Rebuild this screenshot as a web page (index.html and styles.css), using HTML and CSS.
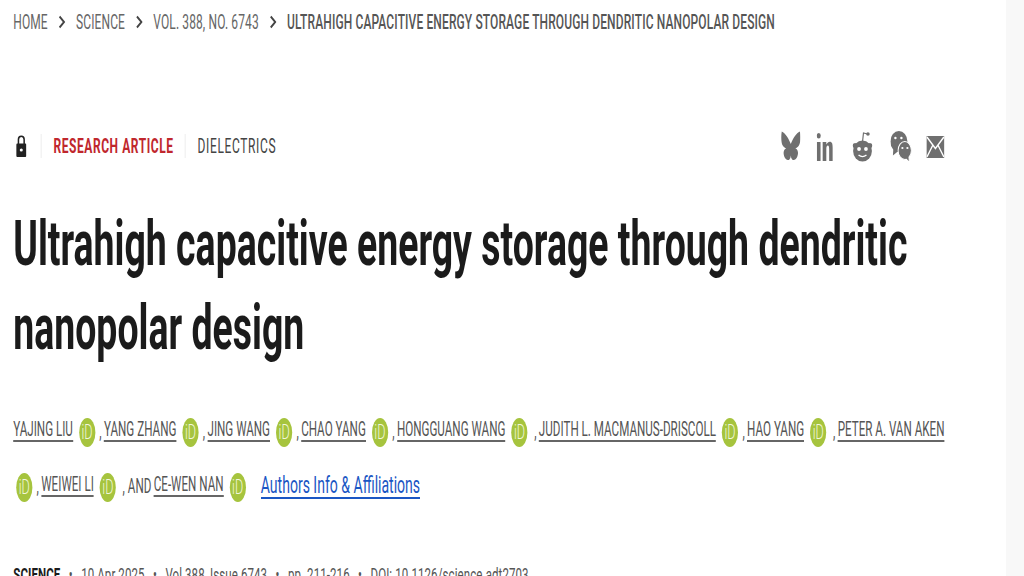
FILE: index.html
```html
<!DOCTYPE html>
<html lang="en">
<head>
    <meta charset="UTF-8">
    <title>Ultrahigh capacitive energy storage through dendritic nanopolar design</title>
    <link rel="stylesheet" href="styles.css">
</head>
<body>
    <div class="page">
    <!-- the whole frame is squeezed sideways, so .sheet carries one scaleX and everything inside is in unscaled px -->
    <div class="sheet">
        <div class="breadcrumb">
            <span>HOME</span>
            <svg class="chev" viewBox="0 0 8 14" preserveAspectRatio="none"><path d="M1.500 1.500 6.500 7l-5 5.500"/></svg>
            <span>SCIENCE</span>
            <svg class="chev" viewBox="0 0 8 14" preserveAspectRatio="none"><path d="M1.500 1.500 6.500 7l-5 5.500"/></svg>
            <span>VOL. 388, NO. 6743</span>
            <svg class="chev" viewBox="0 0 8 14" preserveAspectRatio="none"><path d="M1.500 1.500 6.500 7l-5 5.500"/></svg>
            <strong>ULTRAHIGH CAPACITIVE ENERGY STORAGE THROUGH DENDRITIC NANOPOLAR DESIGN</strong>
        </div>

        <div class="meta-row">
            <div class="tags">
                <svg class="lock" viewBox="0 0 10 22" preserveAspectRatio="none">
                    <path class="lock-hoop" d="M2.200 10V4.500a2.800 3.300 0 0 1 5.600 0V10"/>
                    <rect y="8.500" width="10" height="13.500" rx="1.200"/>
                    <circle class="lock-hole" cx="5" cy="15" r="1.500"/>
                </svg>
                <span class="tag tag-red">RESEARCH ARTICLE</span>
                <span class="tag">DIELECTRICS</span>
            </div>
            <div class="share">
                <svg class="bluesky" viewBox="0 0 19 30" preserveAspectRatio="none"><path d="M.5 .5c3.500 1.500 7 7 9 12.500 2-5.500 5.500-11 9-12.500 1 4 .8 11-1 14-.8 1.500-2.200 2.500-3.500 2.800 2.500 1.200 3.500 4.500 1.800 8.700-1.800 4-5 4-6 .5l-.3-2-.3 2c-1 3.500-4.200 3.500-6 -.5-1.700-4.200-.7-7.500 1.800-8.700C3.700 17 2.300 16 1.500 14.500-.3 11.500-.5 4.500.5 .5z"/></svg>
                <svg class="linkedin" viewBox="0 0 16 28" preserveAspectRatio="none"><ellipse cx="2.100" cy="2.800" rx="2" ry="2.700"/><rect x=".300" y="9" width="3.600" height="19"/><path d="M6 9h3.600v2.600C10.500 9.800 11.800 8.700 13 8.700c2.300 0 3 2.300 3 6V28h-3.600V16c0-2-.3-3.500-1.300-3.500s-1.500 1.500-1.500 3.500v12H6z"/></svg>
                <svg class="reddit" viewBox="0 0 20 32" preserveAspectRatio="none"><path class="thin" d="M10 12 11 3l4 1"/><circle cx="15.500" cy="4" r="1.800"/><circle cx="2.500" cy="15.500" r="2.500"/><circle cx="17.500" cy="15.500" r="2.500"/><ellipse cx="10" cy="21" rx="9.500" ry="10.500"/><circle class="hole" cx="6.500" cy="19" r="1.900"/><circle class="hole" cx="13.500" cy="19" r="1.900"/><path class="smile" d="M6 25c2.500 2 5.500 2 8 0"/></svg>
                <svg class="wechat" viewBox="0 0 21 31" preserveAspectRatio="none">
                    <ellipse cx="8.500" cy="10.500" rx="8.500" ry="10.500"/>
                    <path d="M3 17 2.500 24.500 8 20z"/>
                    <path class="bubble" d="M14.500 10.500c-3.800 0-6.800 4-6.800 9s3 9 6.800 9c.6 0 1-.1 1.500-.2l3 3.200-.4-5.300c1.500-1.600 2.400-4 2.400-6.700 0-5-3-9-6.500-9z"/>
                    <circle class="hole" cx="5" cy="7" r="1.200"/>
                    <circle class="hole" cx="11" cy="7" r="1.200"/>
                    <circle class="hole" cx="12" cy="17" r="1.100"/>
                    <circle class="hole" cx="17" cy="17" r="1.100"/>
                </svg>
                <svg class="mail" viewBox="0 0 18 22" preserveAspectRatio="none"><rect width="18" height="22"/><path class="smile" d="M.5 1 9 12.500 17.500 1M.5 21 6.500 9M17.500 21 11.500 9"/></svg>
            </div>
        </div>

        <h1 class="title">Ultrahigh capacitive energy storage through dendritic nanopolar design</h1>

        <div class="authors">
            <div class="author-line">
                <a class="name">YAJING LIU</a><span class="orcid">iD</span><span class="sep">,</span>
                <a class="name">YANG ZHANG</a><span class="orcid">iD</span><span class="sep">,</span>
                <a class="name">JING WANG</a><span class="orcid">iD</span><span class="sep">,</span>
                <a class="name">CHAO YANG</a><span class="orcid">iD</span><span class="sep">,</span>
                <a class="name">HONGGUANG WANG</a><span class="orcid">iD</span><span class="sep wide">,</span>
                <a class="name">JUDITH L. MACMANUS-DRISCOLL</a><span class="orcid">iD</span><span class="sep">,</span>
                <a class="name">HAO YANG</a><span class="orcid">iD</span><span class="sep wide">,</span>
                <a class="name">PETER A. VAN AKEN</a>
            </div>
            <div class="author-line second">
                <span class="orcid">iD</span><span class="sep">,</span>
                <a class="name">WEIWEI LI</a><span class="orcid">iD</span><span class="sep wide">, AND</span>
                <a class="name">CE-WEN NAN</a><span class="orcid">iD</span>
                <a class="affil">Authors Info &amp; Affiliations</a>
            </div>
        </div>

        <div class="citation">
            <strong>SCIENCE</strong><i>&bull;</i><span>10 Apr 2025</span><i>&bull;</i><span>Vol 388, Issue 6743</span><i>&bull;</i><span>pp. 211-216</span><i>&bull;</i><span>DOI: 10.1126/science.adt2703</span>
        </div>
    </div>
    </div>
</body>
</html>
```

FILE: styles.css
```css
html, body {
    height: 100%;
}
body {
    margin: 0;
    overflow: hidden;
    background-color: #f8f8f8;
    font-family: "Roboto", sans-serif;
    color: #333;
}
.page {
    width: 1006px;
    height: 576px;
    background-color: #fff;
    overflow: hidden;
}
.sheet {
    width: 1677px; /* 1006px after the squeeze */
    height: 576px;
    box-sizing: border-box;
    padding: 11px 0 0 22px;
    transform: scaleX(.6);
    transform-origin: 0 0;
}
.breadcrumb {
    display: flex;
    align-items: center;
    gap: 17.500px;
    height: 21px;
    font-size: 20px;
    letter-spacing: .2px;
    color: #666;
    white-space: nowrap;
}
.breadcrumb strong {
    color: #555;
    font-weight: 500;
}
.chev {
    width: 12px;
    height: 14px;
    fill: none;
    stroke: #444;
    stroke-width: 2;
}
.meta-row {
    display: flex;
    justify-content: space-between;
    align-items: center;
    width: 1552px;
    height: 36px;
    margin-top: 96px;
}
.tags {
    display: flex;
    align-items: center;
    font-size: 20px;
    white-space: nowrap;
}
.lock {
    width: 17px;
    height: 22px;
    margin-left: 5px;
    fill: #222;
}
.lock-hoop {
    fill: none;
    stroke: #222;
    stroke-width: 1.500;
}
.lock-hole {
    fill: #fff;
}
.tag {
    padding: 0 20px;
    border-left: 1.500px solid #e2e2e2;
    color: #444;
    letter-spacing: 1.050px;
}
.tag-red {
    margin-left: 24px;
    padding-right: 19px;
    color: #c0272d;
    font-weight: 700;
    letter-spacing: .95px;
}
.share {
    display: flex;
    align-items: center;
}
.share svg {
    flex: none;
    fill: #6f6f6f;
}
.share .hole {
    fill: #fff;
}
.share .thin {
    fill: none;
    stroke: #6f6f6f;
    stroke-width: 1.200;
}
.share .smile {
    fill: none;
    stroke: #fff;
    stroke-width: 1.400;
}
.share .bubble {
    stroke: #fff;
    stroke-width: 1;
}
.bluesky {
    width: 32px;
    height: 30px;
}
.linkedin {
    width: 27px;
    height: 28px;
    margin-left: 27px;
    margin-top: 2px;
}
.reddit {
    width: 33px;
    height: 32px;
    margin-left: 33px;
}
.wechat {
    width: 35px;
    height: 31px;
    margin-left: 30px;
}
.mail {
    width: 30px;
    height: 22px;
    margin-left: 25px;
    margin-top: 2px;
}
.title {
    width: 1552px;
    margin: 38px 0 0;
    font-size: 62.400px;
    line-height: 84px;
    font-weight: 700;
    color: #1b1b1b;
}
.authors {
    margin-top: 46px;
    font-size: 19.400px;
    color: #555;
}
.author-line {
    display: flex;
    align-items: center;
    height: 30px;
    white-space: nowrap;
}
.author-line.second {
    margin-top: 25px;
}
.name {
    border-bottom: 2px solid #666;
    line-height: 20px;
}
.orcid {
    display: inline-flex;
    align-items: center;
    justify-content: center;
    flex: none;
    width: 27px;
    height: 29px;
    margin: 2px 0 0 10px;
    border-radius: 50%;
    background-color: #a6c43e;
    color: #f2f7dc;
    font-size: 21px;
    font-weight: 300;
}
.sep {
    margin: 0 4px 0 7px;
}
.sep.wide {
    margin: 0 4px 0 11px;
}
.second .orcid:first-child {
    margin-left: 5px;
}
.affil {
    margin-left: 25px;
    font-size: 23.400px;
    line-height: 24px;
    color: #1a56c4;
    border-bottom: 2px solid #1a56c4;
}
.citation {
    display: flex;
    align-items: baseline;
    margin-top: 62px;
    font-size: 19.200px;
    letter-spacing: .15px;
    color: #555;
    white-space: nowrap;
}
.citation strong {
    color: #1b1b1b;
}
.citation i {
    margin: 0 14px;
    font-style: normal;
}
```
